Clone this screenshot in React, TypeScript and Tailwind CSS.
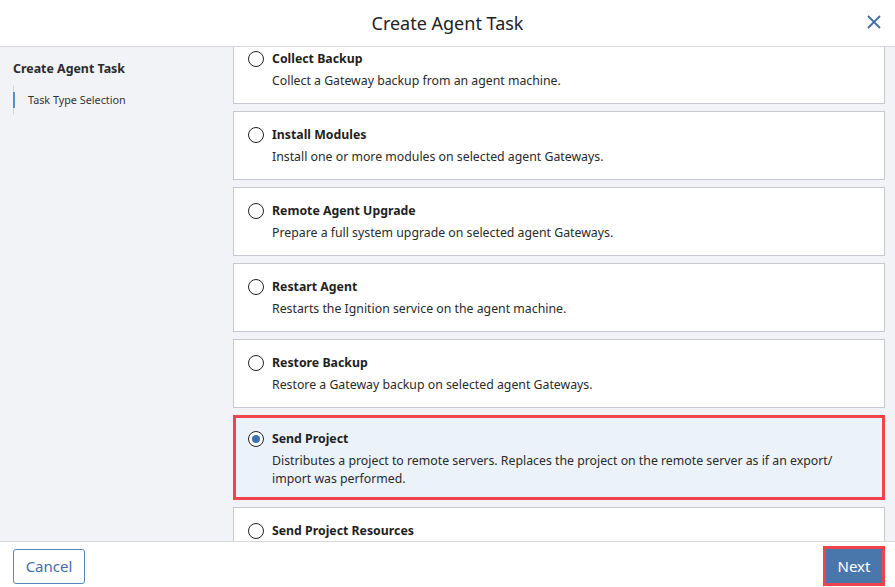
import React from 'react';

interface TaskOption {
  title: string;
  description: string;
}

const options: TaskOption[] = [
  { title: 'Collect Backup', description: 'Collect a Gateway backup from an agent machine.' },
  { title: 'Install Modules', description: 'Install one or more modules on selected agent Gateways.' },
  { title: 'Remote Agent Upgrade', description: 'Prepare a full system upgrade on selected agent Gateways.' },
  { title: 'Restart Agent', description: 'Restarts the Ignition service on the agent machine.' },
  { title: 'Restore Backup', description: 'Restore a Gateway backup on selected agent Gateways.' },
  {
    title: 'Send Project',
    description:
      'Distributes a project to remote servers. Replaces the project on the remote server as if an export/ import was performed.',
  },
  { title: 'Send Project Resources', description: 'Send selected project resources to remote servers.' },
];

const SELECTED = 'Send Project';

const Radio: React.FC<{ checked: boolean }> = ({ checked }) => (
  <span className="flex h-[16px] w-[16px] shrink-0 items-center justify-center rounded-full border-[1.5px] border-[#222] bg-white">
    {checked && <span className="h-[8px] w-[8px] rounded-full bg-[#3f72ad]" />}
  </span>
);

const OptionCard: React.FC<{ option: TaskOption; selected: boolean }> = ({ option, selected }) => (
  <div
    className={
      selected
        ? 'border-[3px] border-[#f0434b] bg-[#ecf2f9] px-[12px] pt-[11px] pb-[9px]'
        : 'border border-[#c5c8cf] bg-white px-[14px] pt-[13px] pb-[13px]'
    }
  >
    <div className="flex h-[20px] items-center gap-[8px]">
      <Radio checked={selected} />
      <span className="text-[12.3px] font-bold text-[#1f1f1f]">{option.title}</span>
    </div>
    <p className="mt-[3px] pl-[24px] pr-[20px] text-[12.3px] leading-[18px] text-[#2a2a2a]">{option.description}</p>
  </div>
);

export default function App() {
  return (
    <div
      className="flex h-[587px] w-[895px] flex-col overflow-hidden bg-white"
      style={{ fontFamily: '"Noto Sans", "Open Sans", sans-serif' }}
    >
      <header className="relative flex h-[47px] shrink-0 items-center justify-center border-b border-[#d6d8de]">
        <h1 className="text-[18px] text-[#222]">Create Agent Task</h1>
        <button className="absolute right-[13px] top-[14px] text-[#3f6fa6]">
          <svg width="16" height="16" viewBox="0 0 16 16" fill="none" stroke="currentColor" strokeWidth="1.8">
            <path d="M2 2l12 12M14 2L2 14" />
          </svg>
        </button>
      </header>

      <div className="flex min-h-0 flex-1 bg-[#f2f3f7]">
        <aside className="w-[233px] shrink-0 px-[13px] pt-[12px]">
          <h2 className="text-[12.4px] font-bold leading-[20px] text-[#2b2b2b]">Create Agent Task</h2>
          <div className="mt-[6px] border-l border-[#d4d6dc] py-[7px]">
            <div className="-ml-px border-l-2 border-[#5d8cc2] pl-[13px] text-[10.8px] leading-[16px] text-[#333]">
              Task Type Selection
            </div>
          </div>
        </aside>
        <main className="min-w-0 flex-1 overflow-hidden pr-[10px]">
          <div className="-mt-[12px] flex flex-col gap-[7px]">
            {options.map((o) => (
              <OptionCard key={o.title} option={o} selected={o.title === SELECTED} />
            ))}
          </div>
        </main>
      </div>

      <footer className="flex h-[46px] shrink-0 items-center justify-between border-t border-[#d6d8de] bg-white pl-[13px] pr-[10px] pt-[3px]">
        <button className="h-[35px] w-[72px] rounded-[3px] border border-[#5a86b8] text-[15px] text-[#3f6fa6]">
          Cancel
        </button>
        <div className="border-[3px] border-[#f0434b]">
          <button className="h-[34px] w-[56px] bg-[#4a77ab] text-[15px] text-white">Next</button>
        </div>
      </footer>
    </div>
  );
}
